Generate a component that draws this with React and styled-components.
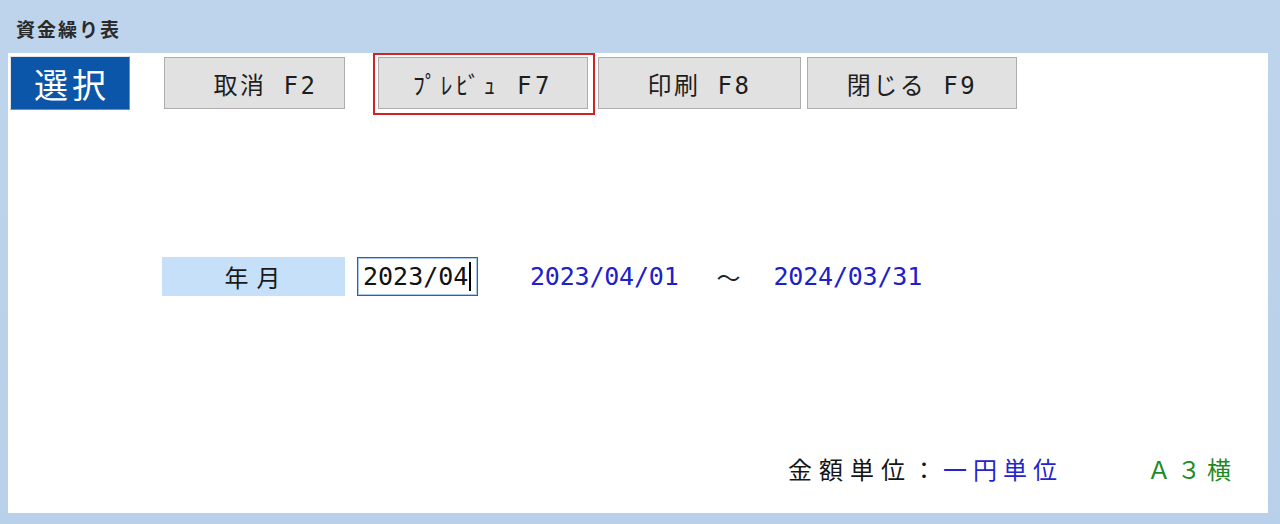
import React from "react";
import styled, { createGlobalStyle } from "styled-components";

const GOTHIC = `"DejaVu Sans Mono", "Noto Sans CJK JP", monospace`;
const CJK = `"Noto Sans CJK JP", sans-serif`;

const GlobalStyle = createGlobalStyle`
  html, body { margin: 0; padding: 0; background: #b9d1ea; }
  body { font-family: ${CJK}; }
  * { box-sizing: border-box; }
`;

const Window = styled.div`
  width: 1280px;
  height: 524px;
  display: flex;
  flex-direction: column;
  background: linear-gradient(#bed4ec, #b8d0e9);
`;

const TitleBar = styled.div`
  height: 53px;
  display: flex;
  align-items: center;
  padding: 4px 0 0 16px;
  font-family: ${CJK};
  font-size: 19px;
  font-weight: 600;
  letter-spacing: 2px;
  color: #2a2a2a;
`;

const Panel = styled.div`
  flex: 1;
  margin: 0 12px 11px 8px;
  background: #ffffff;
  display: flex;
  flex-direction: column;
`;

const Toolbar = styled.div`
  display: flex;
  align-items: center;
  padding: 3px 0 0 2px;
  height: 57px;
`;

const SelectTab = styled.div`
  width: 120px;
  height: 54px;
  display: flex;
  align-items: center;
  justify-content: center;
  background: #0b56a8;
  border-top: 1px solid #e4e4e4;
  border-left: 1px solid #e4e4e4;
  border-right: 1px solid #8c8c8c;
  border-bottom: 1px solid #8c8c8c;
  color: #ffffff;
  font-family: ${CJK};
  font-size: 34px;
  letter-spacing: 4px;
  padding-left: 4px;
`;

const ToolButton = styled.div`
  position: relative;
  width: ${(p) => p.$width}px;
  height: 52px;
  margin-left: ${(p) => p.$ml}px;
  padding-left: ${(p) => p.$pl || 0}px;
  display: flex;
  align-items: center;
  justify-content: center;
  background: #e1e1e1;
  border: 1px solid #adadad;
  color: #1e1e1e;
  font-family: ${GOTHIC};
  font-size: 24px;
  letter-spacing: ${(p) => p.$ls || 2.5}px;
  white-space: pre;

  ${(p) =>
    p.$highlight &&
    `
    &::after {
      content: "";
      position: absolute;
      top: -5px;
      left: -6px;
      right: -8px;
      bottom: -7px;
      border: 2px solid #d42222;
      pointer-events: none;
    }
  `}
`;

const FormRow = styled.div`
  display: flex;
  align-items: center;
  margin-top: 147px;
  padding-left: 154px;
  height: 39px;
`;

const FieldLabel = styled.div`
  width: 183px;
  height: 39px;
  display: flex;
  align-items: center;
  justify-content: center;
  background: #c6e0f9;
  color: #1a1a1a;
  font-family: ${CJK};
  font-size: 24px;
  letter-spacing: 8px;
  padding-left: 6px;
`;

const DateInput = styled.div`
  margin-left: 12px;
  width: 121px;
  height: 39px;
  display: flex;
  align-items: center;
  padding-left: 5px;
  border: 1px solid #1f63b5;
  box-shadow: inset 0 0 0 1px #a8c8ec;
  color: #111;
  font-family: ${GOTHIC};
  font-size: 25px;
`;

const Caret = styled.span`
  display: inline-block;
  width: 2px;
  height: 29px;
  margin-left: 1px;
  background: #000;
`;

const RangeDate = styled.span`
  margin-left: ${(p) => p.$ml}px;
  color: #2020c8;
  font-family: ${GOTHIC};
  font-size: 25px;
  letter-spacing: -0.2px;
`;

const Tilde = styled.span`
  margin-left: 38px;
  color: #222;
  font-family: ${CJK};
  font-size: 24px;
`;

const Footer = styled.div`
  margin-top: auto;
  display: flex;
  justify-content: flex-end;
  align-items: center;
  padding: 0 31px 27px 0;
  font-family: ${CJK};
  font-size: 24px;
`;

const FooterText = styled.span`
  color: ${(p) => p.$color};
  margin-left: ${(p) => p.$ml || 0}px;
  letter-spacing: ${(p) => p.$ls}px;
`;

export default function App() {
  return (
    <>
      <GlobalStyle />
      <Window>
        <TitleBar>資金繰り表</TitleBar>
        <Panel>
          <Toolbar>
            <SelectTab>選択</SelectTab>
            <ToolButton $width={181} $ml={34} $pl={22}>取消 F2</ToolButton>
            <ToolButton $width={210} $ml={33} $ls={3.5} $highlight>ﾌﾟﾚﾋﾞｭ F7</ToolButton>
            <ToolButton $width={203} $ml={10}>印刷 F8</ToolButton>
            <ToolButton $width={210} $ml={6}>閉じる F9</ToolButton>
          </Toolbar>
          <FormRow>
            <FieldLabel>年月</FieldLabel>
            <DateInput>
              2023/04
              <Caret />
            </DateInput>
            <RangeDate $ml={52}>2023/04/01</RangeDate>
            <Tilde>～</Tilde>
            <RangeDate $ml={33}>2024/03/31</RangeDate>
          </FormRow>
          <Footer>
            <FooterText $color="#161616" $ls={7}>金額単位：</FooterText>
            <FooterText $color="#2424cc" $ls={6}>一円単位</FooterText>
            <FooterText $color="#1f8a1f" $ml={84} $ls={6}>Ａ３横</FooterText>
          </Footer>
        </Panel>
      </Window>
    </>
  );
}
